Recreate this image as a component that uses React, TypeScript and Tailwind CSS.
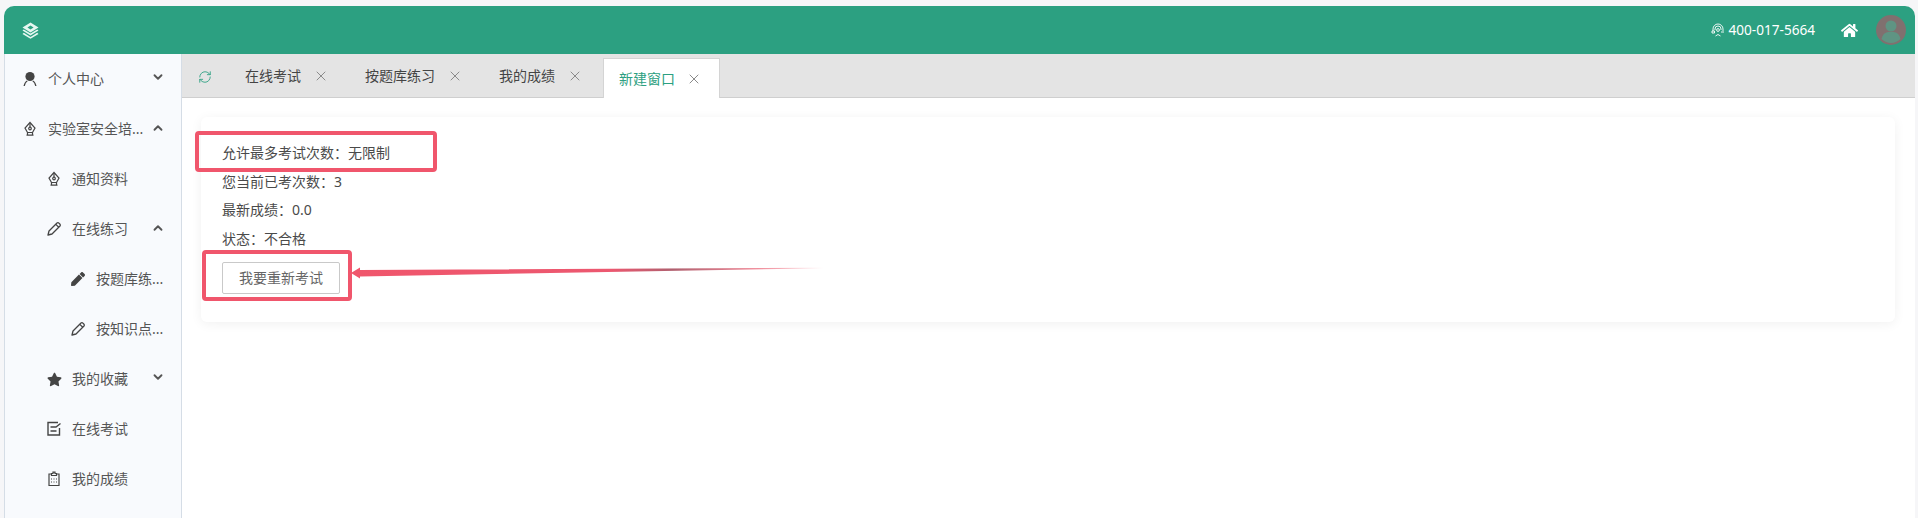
import { ChevronDown, ChevronUp, RefreshCw, X } from 'lucide-react'
import { ReactNode } from 'react'
import { FaHome, FaPen, FaStar } from 'react-icons/fa'

const PersonIcon = () => (
  <svg width="16" height="16" viewBox="0 0 16 16" fill="#444">
    <circle cx="8" cy="5.5" r="4.6" />
    <path d="M1.5 15 Q2.5 10.5 5 9.5 L5.6 10.3 Q3.5 11.5 2.8 15 Z M14.5 15 Q13.5 10.5 11 9.5 L10.4 10.3 Q12.5 11.5 13.2 15 Z" />
  </svg>
)

const PenNib = () => (
  <svg width="16" height="16" viewBox="0 0 16 16" fill="none" stroke="#444" strokeWidth="1.2">
    <path d="M8 1.5 L13 7 L10.5 11.5 H5.5 L3 7 Z" />
    <path d="M8 2 V6" />
    <circle cx="8" cy="7.5" r="1.3" />
    <path d="M4.5 14.2 H11.5 M5.5 11.5 V14.2 M10.5 11.5 V14.2" />
  </svg>
)

const Pencil = () => (
  <svg width="16" height="16" viewBox="0 0 16 16" fill="none" stroke="#444" strokeWidth="1.3" strokeLinejoin="round">
    <path d="M2 14 L3 10 L11 2 Q12 1.2 13.2 2.4 L13.8 3 Q14.8 4 14 5 L6 13 Z" />
    <path d="M9.8 3.4 L12.8 6.3" />
  </svg>
)

const ExamIcon = () => (
  <svg width="16" height="16" viewBox="0 0 16 16" fill="none" stroke="#444" strokeWidth="1.4">
    <path d="M12 1.5 H2 V14 H13.5 V7" />
    <path d="M4.5 6 H10 L14.5 2.5 M4.5 10 H10.5" />
  </svg>
)

const ClipboardIcon = () => (
  <svg width="16" height="16" viewBox="0 0 16 16" fill="none" stroke="#444" strokeWidth="1.2">
    <path d="M5.5 3 H3 V14.5 H13 V3 H10.5" />
    <path d="M5.5 4.5 V2.5 H7 V1.2 H9 V2.5 H10.5 V4.5 Z" />
    <path d="M5 8 H6 M7.5 8 H8.5 M10 8 H11 M5 11 H6 M7.5 11 H8.5 M10 11 H11" />
  </svg>
)

const Logo = () => (
  <svg width="17" height="17" viewBox="0 0 17 17" fill="#e6f7f1">
    <path d="M8.5 0.5 L16.5 5.5 L8.5 10.5 L0.5 5.5 Z M8.5 3.6 L5.4 5.5 L8.5 7.4 L11.6 5.5 Z" fillRule="evenodd" />
    <path d="M1.8 7.4 L8.5 11.6 L15.2 7.4 L16.5 8.6 L8.5 13.6 L0.5 8.6 Z" />
    <path d="M1.8 10.8 L8.5 15 L15.2 10.8 L16.5 12 L8.5 16.8 L0.5 12 Z" />
  </svg>
)

const Headset = () => (
  <svg width="14" height="14" viewBox="0 0 14 14" fill="none" stroke="#fff" strokeWidth="0.9">
    <path d="M2 8 V6 A5 5 0 0 1 12 6 V8" />
    <path d="M4 7 V6 A3 3 0 0 1 10 6 V7" />
    <circle cx="7" cy="7" r="1.4" />
    <path d="M1 8 H3.5 V10 H1 Z M10 9 H13 M4.5 13 Q7 10 9.5 13" />
  </svg>
)

const Avatar = () => (
  <svg width="30" height="30" viewBox="0 0 30 30">
    <circle cx="15" cy="15" r="15" fill="#80706f" />
    <circle cx="15" cy="11" r="5.5" fill="#5f9483" />
    <path d="M5.5 24 Q7 17.5 12 17 H18 Q23 17.5 24.5 24 Q20 28 15 28 Q10 28 5.5 24 Z" fill="#5f9483" />
  </svg>
)

type RowProps = {
  icon: ReactNode
  label: string
  level?: 0 | 1 | 2
  chevron?: 'up' | 'down'
}

const rows: RowProps[] = [
  { icon: <PersonIcon />, label: '个人中心', chevron: 'down' },
  { icon: <PenNib />, label: '实验室安全培...', chevron: 'up' },
  { icon: <PenNib />, label: '通知资料', level: 1 },
  { icon: <Pencil />, label: '在线练习', level: 1, chevron: 'up' },
  { icon: <FaPen size={14} color="#444" />, label: '按题库练...', level: 2 },
  { icon: <Pencil />, label: '按知识点...', level: 2 },
  { icon: <FaStar size={15} color="#444" />, label: '我的收藏', level: 1, chevron: 'down' },
  { icon: <ExamIcon />, label: '在线考试', level: 1 },
  { icon: <ClipboardIcon />, label: '我的成绩', level: 1 },
]

const SideRow = ({ icon, label, level = 0, chevron }: RowProps) => (
  <div
    className={
      'relative flex h-[50px] shrink-0 items-center text-[14px] text-[#555] whitespace-nowrap ' +
      (level === 0 ? 'pl-[17px]' : level === 1 ? 'pl-[41px]' : 'pl-[65px]')
    }
  >
    <span className="mr-[10px] flex w-[16px] justify-center">{icon}</span>
    <span className="-translate-y-px">{label}</span>
    {chevron === 'down' && <ChevronDown className="absolute left-[146px] top-[16px]" size={14} strokeWidth={3.2} color="#555" />}
    {chevron === 'up' && <ChevronUp className="absolute left-[146px] top-[17px]" size={14} strokeWidth={3.2} color="#555" />}
  </div>
)

const tabs = [
  { label: '在线考试', width: 'w-[120px]' },
  { label: '按题库练习', width: 'w-[134px]' },
  { label: '我的成绩', width: 'w-[120px]' },
]

export default function App() {
  return (
    <div
      className="flex h-[518px] w-[1918px] flex-col overflow-hidden bg-[#f6f6f8] pt-[6px] pr-[3px] pl-[4px]"
      style={{ fontFamily: '"Noto Sans", "Noto Sans CJK SC", sans-serif' }}
    >
      <header className="flex h-[48px] shrink-0 items-center rounded-t-[10px] bg-[#2ca081] pr-[9px] pl-[18px] text-white">
        <Logo />
        <div className="ml-auto flex items-center">
          <Headset />
          <span className="ml-[3px] text-[13.6px]">400-017-5664</span>
          <FaHome className="ml-[26px]" size={17} />
          <div className="ml-[18px]">
            <Avatar />
          </div>
        </div>
      </header>

      <div className="flex min-h-0 flex-1">
        <aside className="flex w-[178px] shrink-0 flex-col overflow-hidden border-r border-l border-[#d5dde6] bg-[#f8fafd]">
          {rows.map((r) => (
            <SideRow key={r.label} {...r} />
          ))}
        </aside>

        <main className="flex min-w-0 flex-1 flex-col bg-white">
          <div className="flex h-[44px] shrink-0 border-b border-[#cfcfcf] bg-[#e4e4e4] pl-[16px]">
            <RefreshCw className="mt-[16px] mr-[19px]" size={14} color="#2ca081" strokeWidth={1.5} />
            {tabs.map((t) => (
              <div key={t.label} className={'flex h-[43px] items-center pl-[14px] text-[14px] text-[#444] ' + t.width}>
                <span>{t.label}</span>
                <X className="ml-[12px]" size={16} color="#7c7c7c" strokeWidth={1.3} />
              </div>
            ))}
            <div className="mt-[4px] -ml-[2px] flex h-[40px] w-[117px] items-center border-x border-t border-[#d4d4d4] bg-white pl-[15px] text-[14px] text-[#2ca081]">
              <span>新建窗口</span>
              <X className="ml-[11px]" size={16} color="#777" strokeWidth={1.3} />
            </div>
          </div>

          <div className="pt-[19px] pr-[20px] pl-[19px]">
            <div className="relative h-[205px] rounded-[6px] bg-white pt-[22px] pl-[21px] text-[14px] text-[#4a4a4a] shadow-[0_2px_12px_rgba(0,0,0,0.06)]">
              <p className="leading-[28.7px]">允许最多考试次数：无限制</p>
              <p className="leading-[28.7px]">您当前已考次数：3</p>
              <p className="leading-[28.7px]">最新成绩：0.0</p>
              <p className="leading-[28.7px]">状态：不合格</p>
              <button className="mt-[8px] h-[32px] w-[118px] rounded-[2px] border border-[#c9c9c9] bg-white text-[14px] text-[#666]">
                我要重新考试
              </button>

              {/* red annotations drawn on top of the screenshot */}
              <div className="absolute top-[14px] left-[-6px] h-[41px] w-[242px] rounded-[4px] border-[4px] border-[#f0566c]" />
              <div className="absolute top-[133px] left-[1px] h-[51px] w-[150px] rounded-[4px] border-[4px] border-[#f0566c]" />
              <svg className="absolute top-[140px] left-[149px]" width="480" height="30" viewBox="0 0 480 30">
                <defs>
                  <linearGradient id="fade" gradientUnits="userSpaceOnUse" x1="0" x2="474" y1="0" y2="0">
                    <stop offset="0" stopColor="#f0566c" />
                    <stop offset="0.55" stopColor="#ec5870" />
                    <stop offset="0.68" stopColor="#b0606f" />
                    <stop offset="0.85" stopColor="#ee8a98" />
                    <stop offset="1" stopColor="#f0566c" stopOpacity="0" />
                  </linearGradient>
                </defs>
                <path d="M1 16 L10 10.5 L10 13 L474 10.8 L474 11.2 L10 19.5 L10 21.5 Z" fill="url(#fade)" />
              </svg>
            </div>
          </div>
        </main>
      </div>
    </div>
  )
}
